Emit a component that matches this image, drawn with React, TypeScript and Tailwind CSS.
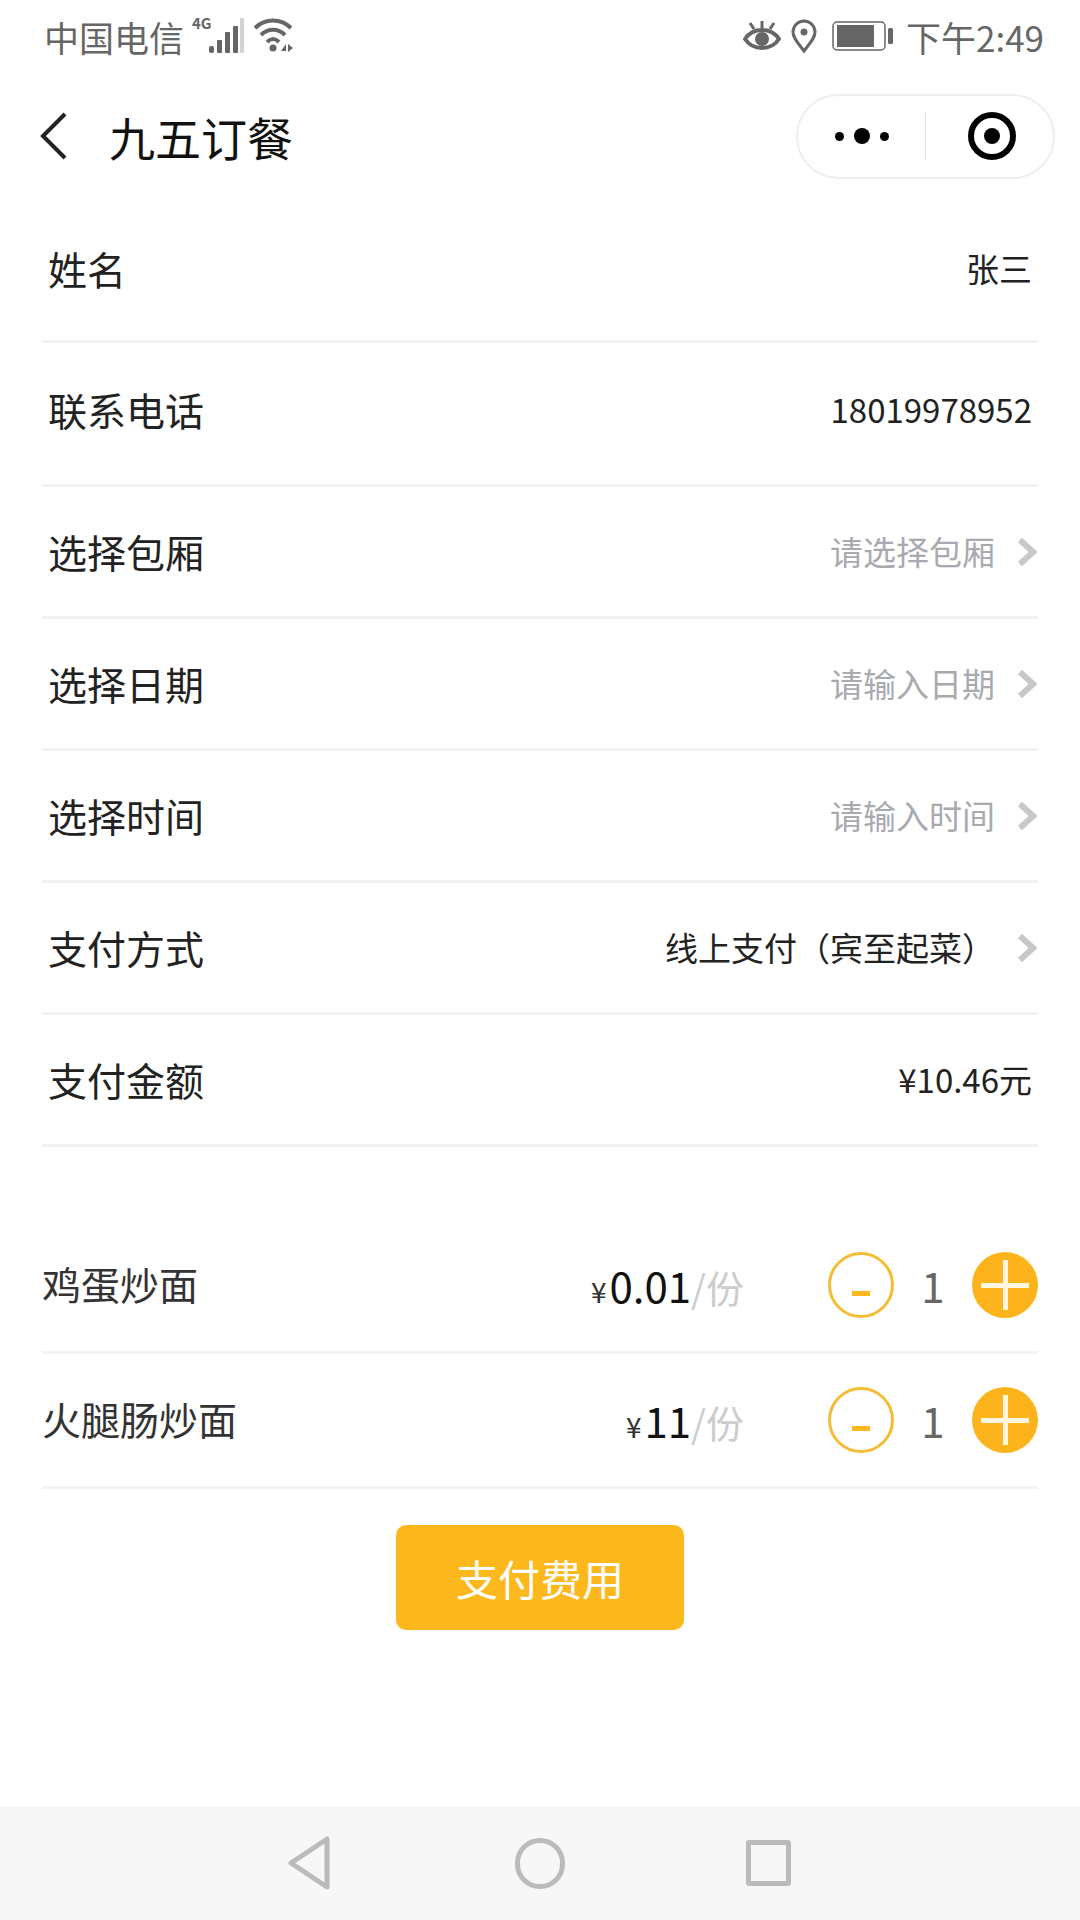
const cjk = "font-['Noto_Sans_CJK_SC','Noto_Sans',sans-serif]";

function Chevron() {
  return (
    <svg width="20" height="30" viewBox="0 0 20 30" className="ml-[22px]">
      <path d="M3 3 L16 15 L3 27" fill="none" stroke="#c8c8c8" strokeWidth="6" />
    </svg>
  );
}

function StatusBar() {
  return (
    <div className="h-[72px] flex items-center justify-between pl-[44px] pr-[36px] text-[#666] text-[35px] leading-none">
      <div className="flex items-center">
        <span>中国电信</span>
        <div className="relative w-[58px] h-[36px] ml-[8px]">
          <span className="absolute left-0 top-[-3px] text-[15px] font-bold leading-[16px]">4G</span>
          <svg width="58" height="36" viewBox="0 0 58 36" className="absolute left-0 top-0">
            <rect x="17" y="28" width="5" height="7" rx="2" fill="#666" />
            <rect x="25" y="22" width="5" height="13" rx="1" fill="#666" />
            <rect x="33" y="14" width="5" height="21" rx="1" fill="#666" />
            <rect x="41" y="8" width="5" height="27" rx="1" fill="#666" />
            <rect x="48" y="-1" width="4" height="36" fill="#d4d4d4" />
          </svg>
        </div>
        <svg width="42" height="38" viewBox="0 0 42 38" className="ml-[3px]">
          <path d="M2 11 C12 1 28 1 38 11" fill="none" stroke="#666" strokeWidth="4" />
          <path d="M8 18 C15 11 25 11 32 18" fill="none" stroke="#666" strokeWidth="4" />
          <path d="M14 25 C18 21 22 21 26 25" fill="none" stroke="#666" strokeWidth="4" />
          <circle cx="20" cy="31" r="3.5" fill="#666" />
          <path d="M28 34 L33 27 V34 Z M35 27 L40 31 L35 35 Z" fill="#666" />
        </svg>
      </div>
      <div className="flex items-center">
        <svg width="38" height="36" viewBox="0 0 38 36" className="-ml-px">
          <path d="M2 21 C10 9 28 9 36 21 C28 33 10 33 2 21 Z" fill="none" stroke="#666" strokeWidth="4" />
          <circle cx="19" cy="21" r="7" fill="#666" />
          <path d="M19 3 V10 M7 5 L11 11 M31 5 L27 11" stroke="#666" strokeWidth="3" />
        </svg>
        <svg width="28" height="36" viewBox="0 0 28 36" className="ml-[9px]">
          <path d="M14 33 C8 25 3 20 3 14 A11 11 0 0 1 25 14 C25 20 20 25 14 33 Z" fill="none" stroke="#666" strokeWidth="3" />
          <circle cx="14" cy="14" r="3.5" fill="#666" />
        </svg>
        <svg width="62" height="30" viewBox="0 0 62 30" className="ml-[14px]">
          <rect x="1" y="1" width="52" height="28" rx="4" fill="none" stroke="#666" strokeWidth="1.5" />
          <rect x="5" y="4" width="37" height="22" fill="#666" />
          <rect x="56" y="7" width="5" height="16" rx="1.5" fill="#666" />
        </svg>
        <span className="ml-[12px]">下午2:49</span>
      </div>
    </div>
  );
}

function NavBar() {
  return (
    <div className="h-[127px] flex items-center justify-between pl-[40px] pr-[25px] pt-[1px]">
      <div className="flex items-center">
        <svg width="28" height="48" viewBox="0 0 28 48">
          <path d="M25 2 L3 24 L25 46" fill="none" stroke="#222" strokeWidth="4" />
        </svg>
        <span className="ml-[41px] text-[46px] leading-none text-[#111]">九五订餐</span>
      </div>
      <div className="w-[259px] h-[85px] rounded-full border-2 border-[#eeeeee] flex items-center">
        <div className="w-[127px] flex items-center justify-center gap-[10px]">
          <div className="w-[9px] h-[9px] rounded-full bg-black" />
          <div className="w-[16px] h-[16px] rounded-full bg-black" />
          <div className="w-[9px] h-[9px] rounded-full bg-black" />
        </div>
        <div className="w-px h-[48px] bg-[#e0e0e0]" />
        <div className="flex-1 flex items-center justify-center pl-[4px]">
          <div className="w-[48px] h-[48px] rounded-full border-[6px] border-black flex items-center justify-center">
            <div className="w-[16px] h-[16px] rounded-full bg-black" />
          </div>
        </div>
      </div>
    </div>
  );
}

function FormRow({
  label,
  value,
  placeholder,
  arrow,
  className = "h-[132px]",
}: {
  label: string;
  value: string;
  placeholder?: boolean;
  arrow?: boolean;
  className?: string;
}) {
  return (
    <div
      className={`mx-[42px] border-b-[3px] border-[#f3f3f3] flex items-center justify-between pl-[6px] ${className} ${
        arrow ? "pr-px" : "pr-[6px]"
      }`}
    >
      <span className="text-[39px] leading-none text-[#222]">{label}</span>
      <div className="flex items-center">
        <span className={`text-[33px] leading-none ${placeholder ? "text-[#a9a9b0]" : "text-[#222]"}`}>{value}</span>
        {arrow && <Chevron />}
      </div>
    </div>
  );
}

function FoodRow({ name, price }: { name: string; price: string }) {
  return (
    <div className="mx-[42px] h-[135px] border-b-[3px] border-[#f3f3f3] flex items-center">
      <span className="text-[39px] leading-none text-[#333] mb-[4px]">{name}</span>
      <div className="ml-auto flex items-baseline leading-none">
        <span className="text-[28px] text-[#333] mr-[3px]">¥</span>
        <span className="text-[42px] text-[#111]">{price}</span>
        <span className="text-[38px] text-[#cccccc]">/份</span>
      </div>
      <div className="ml-[84px] w-[66px] h-[66px] rounded-full border-[3px] border-[#f5bd36] flex items-center justify-center">
        <div className="w-[18px] h-[5px] bg-[#fdb81e] mt-[16px]" />
      </div>
      <span className="w-[78px] text-center text-[42px] leading-none text-[#666]">1</span>
      <div className="relative w-[66px] h-[66px] rounded-full bg-[#fdb41c] flex items-center justify-center">
        <div className="w-[48px] h-[5px] bg-[#fff6e0]" />
        <div className="absolute w-[5px] h-[50px] bg-[#fff6e0]" />
      </div>
    </div>
  );
}

export default function App() {
  return (
    <div className={`w-[1080px] h-[1920px] bg-white flex flex-col ${cjk}`}>
      <StatusBar />
      <NavBar />
      <FormRow label="姓名" value="张三" className="h-[144px] pb-[2px]" />
      <FormRow label="联系电话" value="18019978952" className="h-[144px] pb-[8px]" />
      <FormRow label="选择包厢" value="请选择包厢" placeholder arrow />
      <FormRow label="选择日期" value="请输入日期" placeholder arrow />
      <FormRow label="选择时间" value="请输入时间" placeholder arrow />
      <FormRow label="支付方式" value="线上支付（宾至起菜）" arrow />
      <FormRow label="支付金额" value="¥10.46元" />
      <div className="mt-[72px]">
        <FoodRow name="鸡蛋炒面" price="0.01" />
        <FoodRow name="火腿肠炒面" price="11" />
      </div>
      <div className="mt-[36px] flex justify-center">
        <button className="w-[288px] h-[105px] rounded-[10px] bg-[#fdb81e] text-white text-[42px] leading-none">
          支付费用
        </button>
      </div>
      <div className="mt-auto h-[114px] bg-[#f7f7f7] flex items-center justify-center">
        <svg width="44" height="54" viewBox="0 0 44 54" className="-ml-[2px]">
          <path d="M4 27 L40 3 V51 Z" fill="none" stroke="#bbbbbb" strokeWidth="5" strokeLinejoin="round" />
        </svg>
        <div className="ml-[184px] w-[50px] h-[51px] rounded-full border-[5px] border-[#bbbbbb]" />
        <div className="ml-[181px] w-[45px] h-[46px] rounded-[3px] border-[5px] border-[#bbbbbb]" />
      </div>
    </div>
  );
}
